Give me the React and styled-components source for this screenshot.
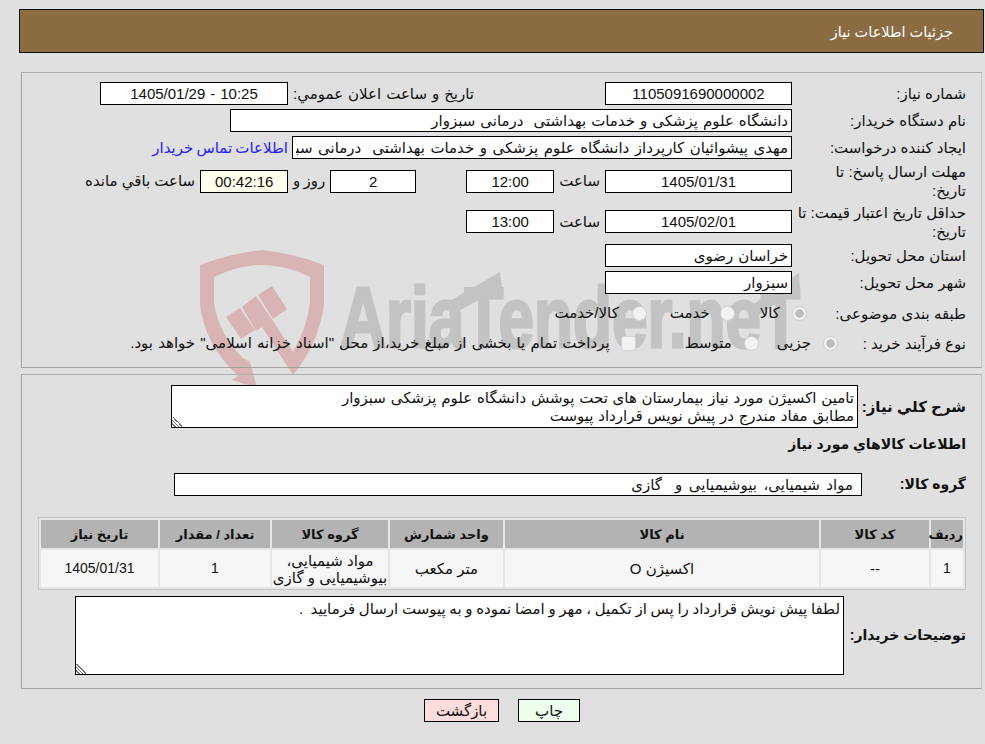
import styled, { createGlobalStyle } from "styled-components";

const GlobalStyle = createGlobalStyle`
  html, body {
    margin: 0;
    padding: 0;
    background: #e0e0e0;
  }
  body {
    font-family: "Liberation Sans", "DejaVu Sans", sans-serif;
    font-size: 15px;
    color: #111;
  }
`;

const Page = styled.div`
  position: relative;
  width: 985px;
  height: 744px;
  overflow: hidden;
  direction: rtl;
`;

const Watermark = styled.svg`
  position: absolute;
  left: 190px;
  top: 240px;
`;

const Content = styled.div`
  position: relative;
  padding: 9px 1px 0 19px;
`;

const Header = styled.div`
  height: 42px;
  line-height: 44px;
  padding-right: 30px;
  background: #8b6b42;
  border: 1px solid #111;
  color: #fff;
  font-size: 14.5px;
`;

const Panel = styled.div`
  margin: ${(p) => p.$top}px 2px 0 2px;
  height: ${(p) => p.$h}px;
  box-sizing: border-box;
  padding: ${(p) => p.$pad}px 15px 0 0;
  border: 1px solid #a2a2a2;
  border-right-color: #c4c4c4;
  border-top-color: #b0b0b0;
  display: flex;
  flex-direction: column;
  gap: ${(p) => p.$gap ?? 4}px;
`;

const Row = styled.div`
  display: flex;
  align-items: center;
  flex: none;
  height: ${(p) => p.$h || 23}px;
  margin-top: ${(p) => p.$top || 0}px;
`;

const Label = styled.div`
  width: ${(p) => p.$w || 174}px;
  flex: none;
  line-height: 19px;
  padding-right: ${(p) => p.$pr || 0}px;
  padding-left: ${(p) => p.$pl || 0}px;
  box-sizing: border-box;
  font-size: ${(p) => p.$size || 15}px;
  word-spacing: ${(p) => p.$ws || 0}px;
  font-weight: ${(p) => (p.$bold ? 700 : 400)};
  white-space: ${(p) => (p.$wrap ? "normal" : "nowrap")};
`;

const Field = styled.input`
  width: ${(p) => p.$w}px;
  height: 23px;
  box-sizing: border-box;
  flex: none;
  margin: 0 ${(p) => p.$mr || 0}px 0 0;
  padding: 0 ${(p) => p.$pr || 3}px 0 3px;
  border: 1px solid #000;
  border-radius: 0;
  outline: none;
  background: ${(p) => p.$bg || "#fff"};
  color: #111;
  font: inherit;
  word-spacing: ${(p) => p.$ws ?? 0.8}px;
  text-align: ${(p) => (p.$center ? "center" : "right")};
`;

const Note = styled.textarea`
  display: block;
  flex: none;
  width: ${(p) => p.$w}px;
  height: ${(p) => p.$h}px;
  box-sizing: border-box;
  padding: 3px;
  border: 1px solid #000;
  border-radius: 0;
  outline: none;
  background: #fff;
  color: #111;
  font: inherit;
  line-height: 18px;
  word-spacing: ${(p) => p.$ws}px;
  overflow: hidden;

  &::-webkit-resizer {
    background: linear-gradient(
        45deg,
        transparent 14%,
        #777 14% 21%,
        transparent 21% 32%,
        #777 32% 39%,
        transparent 39% 50%,
        #777 50% 57%,
        transparent 57%
      )
      left bottom / 10px 10px no-repeat;
  }
`;

const Word = styled.span`
  flex: none;
  width: ${(p) => (p.$w ? `${p.$w}px` : "auto")};
  margin-right: ${(p) => p.$mr || 0}px;
  word-spacing: ${(p) => p.$ws || 0}px;
  white-space: pre;
`;

const ContactLink = styled.a`
  margin-right: 4px;
  color: #2222ff;
  text-decoration: none;
  word-spacing: -1px;
  white-space: nowrap;
`;

const Radio = styled.span`
  flex: none;
  width: 13px;
  height: 13px;
  margin-right: ${(p) => p.$mr || 0}px;
  border: 1px solid #cfcfcf;
  border-radius: 50%;
  background: ${(p) =>
    p.$checked
      ? "radial-gradient(circle, #bcbcbc 0 4px, #f2f2f2 4.5px)"
      : "#f2f2f2"};
`;

const Check = styled.span`
  flex: none;
  width: 13px;
  height: 13px;
  margin-right: ${(p) => p.$mr || 0}px;
  border: 1px solid #d4d4d4;
  border-radius: 3px;
  background: #f2f2f2;
`;

const Heading = styled.div`
  flex: none;
  height: 20px;
  margin-top: 6px;
  font-size: 14px;
  font-weight: 700;
  line-height: 20px;
`;

const Items = styled.table`
  width: 928px;
  margin: 21px 0 0;
  flex: none;
  box-sizing: border-box;
  table-layout: fixed;
  border-collapse: separate;
  border-spacing: 2px;
  border: 1px solid #c4c4c4;
  background: #e6e6e6;
  font-size: 15px;

  th {
    height: 28px;
    padding: 0;
    background: #b3b3b3;
    font-weight: 700;
    font-size: 13px;
  }

  td {
    height: 37px;
    padding: 0;
    background: #f6f6f6;
    text-align: center;
    line-height: 17px;
  }

  td.num {
    font-size: 14px;
  }
`;

const Actions = styled.div`
  display: flex;
  margin: 10px 0 0;
  padding-right: 404px;
`;

const Button = styled.button`
  width: ${(p) => p.$w}px;
  height: 23px;
  margin-right: ${(p) => p.$mr || 0}px;
  padding: 0;
  border: 1px solid #000;
  border-radius: 0;
  background: ${(p) => p.$bg};
  color: #111;
  font: inherit;
`;

const columns = [32, 108, 314, 113, 116, 110, 117];
const shieldRed = "#d8b4b4";
const markGray = "#c3c3c3";

function AriaMark() {
  return (
    <Watermark width="620" height="150" viewBox="190 240 620 150">
      <path
        d="M200 265 Q231 253 262 250 Q293 253 324 265 L324 305 Q318 345 293 375 L294 350 Q306 330 310 303 L310 277 Q286 265 262 265 Q238 265 214 277 L214 303 Q219 335 243 358 L250 362 L257 388 L232 380 L238 376 Q205 345 200 305 Z"
        fill={shieldRed}
      />
      <path d="M226 317 L240 308 L255 330 L241 339 Z" fill={shieldRed} />
      <path d="M242 307 L256 296 L271 318 L300 362 L293 375 L262 327 L256 331 Z" fill={shieldRed} />
      <path d="M258 295 L272 286 L287 309 L273 319 Z" fill={shieldRed} />
      <text
        x="340"
        y="347"
        fontFamily="Liberation Sans, sans-serif"
        fontWeight="700"
        fontSize="86"
        fill={markGray}
        stroke={markGray}
        strokeWidth="3"
        textLength="460"
        lengthAdjust="spacingAndGlyphs"
        direction="ltr"
      >
        AriaTender.neT
      </text>
      <path d="M448 302 L500 272 L502 287 L450 316 Z" fill={markGray} />
      <path d="M752 305 L799 273 L800 288 L754 318 Z" fill={markGray} />
    </Watermark>
  );
}

export default function App() {
  return (
    <Page>
      <GlobalStyle />
      <AriaMark />
      <Content>
        <Header>جزئیات اطلاعات نیاز</Header>

        <Panel $top={19} $h={296} $pad={9}>
          <Row>
            <Label>شماره نیاز:</Label>
            <Field readOnly $w={187} $center $ws={0} value="1105091690000002" />
            <Label $w={317} $pr={131} $ws={0.8}>
              تاریخ و ساعت اعلان عمومي:
            </Label>
            <Field readOnly $w={188} $center value="10:25 - 1405/01/29" />
          </Row>
          <Row>
            <Label>نام دستگاه خریدار:</Label>
            <Field readOnly $w={562} value="دانشگاه علوم پزشکی و خدمات بهداشتی  درمانی سبزوار" />
          </Row>
          <Row>
            <Label>ایجاد کننده درخواست:</Label>
            <Field
              readOnly
              $w={500}
              $ws={1.3}
              value="مهدی پیشوائیان کارپرداز دانشگاه علوم پزشکی و خدمات بهداشتی  درمانی سبزوار"
            />
            <ContactLink href="#">اطلاعات تماس خریدار</ContactLink>
          </Row>
          <Row $h={36}>
            <Label $wrap $pl={6}>مهلت ارسال پاسخ: تا تاریخ:</Label>
            <Field readOnly $w={187} $center value="1405/01/31" />
            <Word $mr={5}>ساعت</Word>
            <Field readOnly $w={88} $mr={5} $center value="12:00" />
            <Field readOnly $w={86} $mr={50} $center value="2" />
            <Word $w={28} $mr={5} $ws={-1}>روز و</Word>
            <Field readOnly $w={88} $mr={9} $bg="#ffffee" $center value="00:42:16" />
            <Word $mr={5}>ساعت باقي مانده</Word>
          </Row>
          <Row $h={37}>
            <Label $wrap>حداقل تاریخ اعتبار قیمت: تا تاریخ:</Label>
            <Field readOnly $w={187} $center value="1405/02/01" />
            <Word $mr={5}>ساعت</Word>
            <Field readOnly $w={88} $mr={5} $center value="13:00" />
          </Row>
          <Row>
            <Label>استان محل تحویل:</Label>
            <Field readOnly $w={187} value="خراسان رضوی" />
          </Row>
          <Row>
            <Label>شهر محل تحویل:</Label>
            <Field readOnly $w={187} value="سبزوار" />
          </Row>
          <Row $h={30}>
            <Label $w={159}>طبقه بندی موضوعی:</Label>
            <Radio $checked />
            <Word $mr={12}>کالا</Word>
            <Radio $mr={25} />
            <Word $mr={10}>خدمت</Word>
            <Radio $mr={23} />
            <Word $mr={13}>کالا/خدمت</Word>
          </Row>
          <Row $h={22}>
            <Label $w={128}>نوع فرآیند خرید :</Label>
            <Radio $checked />
            <Word $mr={12}>جزیی</Word>
            <Radio $mr={18} />
            <Word $mr={12}>متوسط</Word>
            <Check $mr={49} />
            <Word $mr={11} $ws={1}>
              پرداخت تمام یا بخشی از مبلغ خرید،از محل "اسناد خزانه اسلامی" خواهد بود.
            </Word>
          </Row>
        </Panel>

        <Panel $top={6} $h={315} $pad={10} $gap={0}>
          <Row $h={43}>
            <Label $w={108} $bold>شرح کلي نياز:</Label>
            <Note
              readOnly
              $w={687}
              $h={43}
              $ws={0.6}
              defaultValue={"تامین اکسیژن مورد نیاز بیمارستان های تحت پوشش دانشگاه علوم پزشکی سبزوار\nمطابق مفاد مندرج در پیش نویس قرارداد پیوست"}
            />
          </Row>
          <Heading>اطلاعات کالاهاي مورد نياز</Heading>
          <Row $top={19}>
            <Label $w={104} $bold $size={14}>گروه کالا:</Label>
            <Field readOnly $w={688} $pr={8} $ws={2.4} value="مواد شیمیایی، بیوشیمیایی و  گازی" />
          </Row>
          <Items>
            <colgroup>
              {columns.map((w, i) => (
                <col key={i} style={{ width: w }} />
              ))}
            </colgroup>
            <thead>
              <tr>
                <th>ردیف</th>
                <th>کد کالا</th>
                <th>نام کالا</th>
                <th>واحد شمارش</th>
                <th>گروه کالا</th>
                <th>تعداد / مقدار</th>
                <th>تاریخ نیاز</th>
              </tr>
            </thead>
            <tbody>
              <tr>
                <td className="num">1</td>
                <td>--</td>
                <td>اکسیژن O</td>
                <td>متر مکعب</td>
                <td>مواد شیمیایی، بیوشیمیایی و گازی</td>
                <td className="num">1</td>
                <td className="num">1405/01/31</td>
              </tr>
            </tbody>
          </Items>
          <Row $h={79} $top={6}>
            <Label $w={122} $bold $size={14}>توضیحات خریدار:</Label>
            <Note
              readOnly
              $w={769}
              $h={79}
              $ws={-0.5}
              defaultValue="لطفا پیش نویش قرارداد را پس از تکمیل ، مهر و امضا نموده و به پیوست ارسال فرمایید  ."
            />
          </Row>
        </Panel>

        <Actions>
          <Button $w={62} $bg="#eeffee">چاپ</Button>
          <Button $w={75} $mr={19} $bg="#ffdddd">بازگشت</Button>
        </Actions>
      </Content>
    </Page>
  );
}
